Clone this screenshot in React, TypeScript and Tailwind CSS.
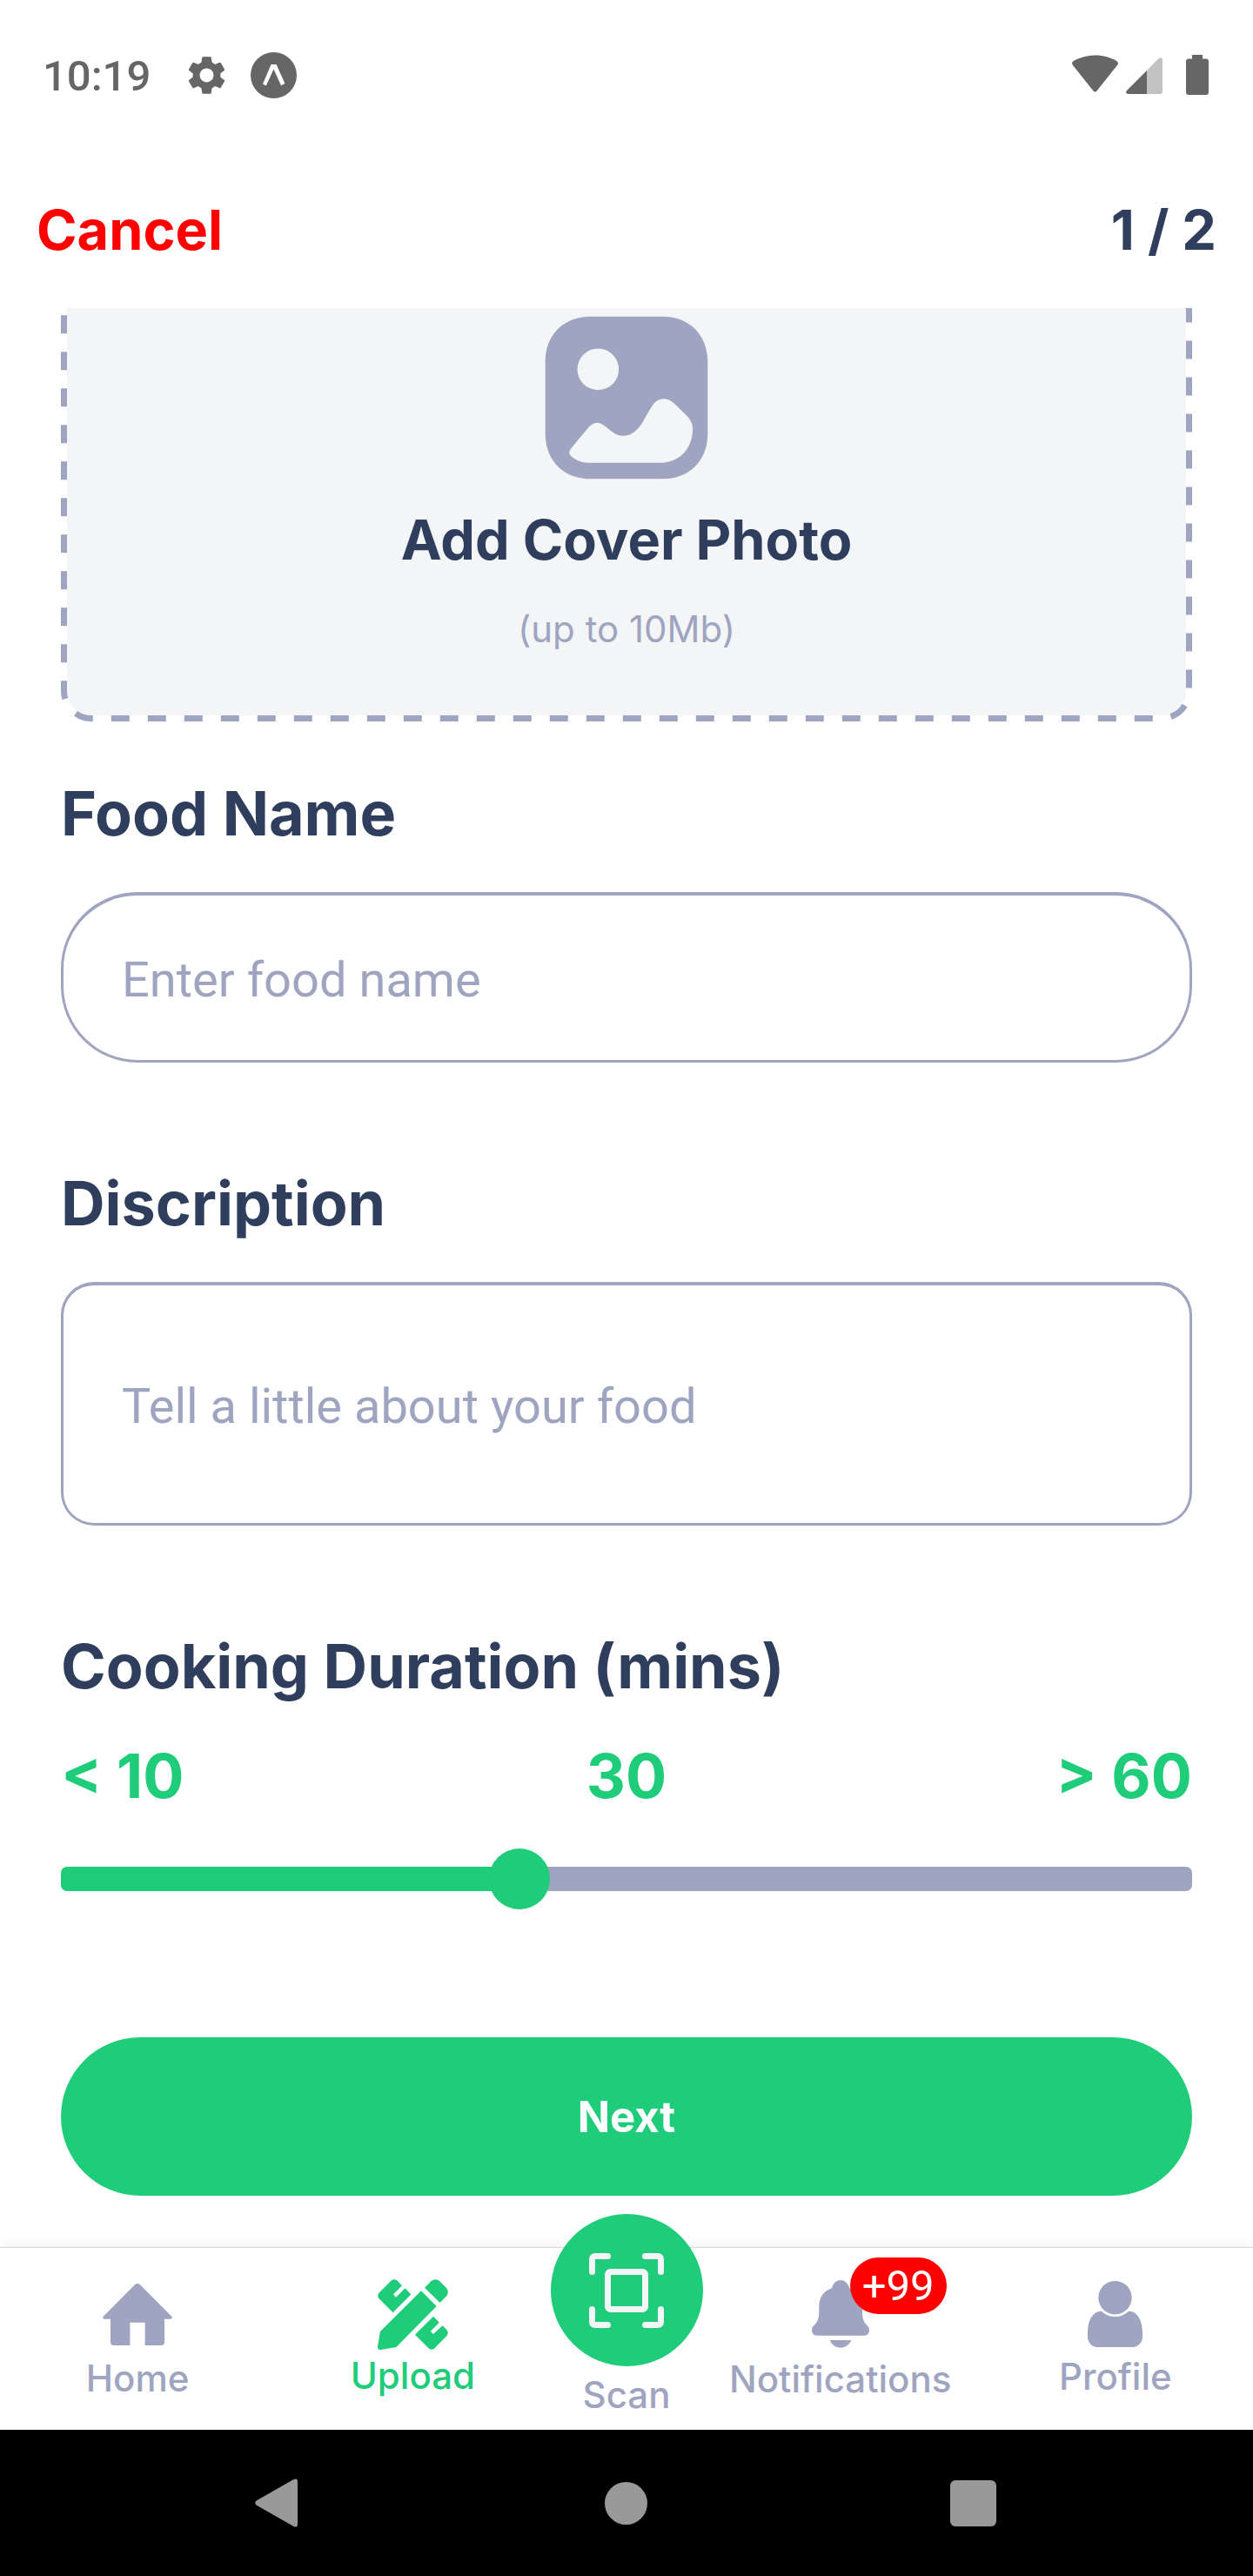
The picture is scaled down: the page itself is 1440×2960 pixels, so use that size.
import { useState } from "react";
import type { ReactNode } from "react";
import { MdSettings } from "react-icons/md";

function StatusBar() {
  return (
    <div className="flex h-[176px] items-center justify-between pl-[49px] pr-[51px] text-[#666666]">
      <div className="flex items-center">
        <span className="mr-[38px] font-[Roboto,sans-serif] text-[49px] font-medium leading-[58px]">10:19</span>
        <MdSettings className="mr-6 size-[53px] -translate-y-0.5" aria-hidden="true" />
        <svg className="h-14 w-[53px]" viewBox="0 0 53 56" aria-hidden="true">
          <circle cx="26.5" cy="26.5" r="26.5" fill="currentColor" />
          <path d="M14 36.5 23.6 14h6L39.4 36 35 38.2 26.5 19.5 17.8 38.5Z" fill="#fff" />
        </svg>
      </div>
      <div className="flex items-center">
        <svg className="mr-[9px] h-[54px] w-[53px]" viewBox="0 0 53 54" fill="currentColor" aria-hidden="true">
          <path d="M1 14Q-1.2 10.800 1.800 9C17 .2 36 .2 51.200 9Q54.200 10.800 52 14L28.500 43.500Q26.500 45.500 24.500 43.500Z" />
        </svg>
        <svg className="mr-[27px] h-[54px] w-[42px]" viewBox="0 -5 42 54" aria-hidden="true">
          <path d="M24 15 1 38Q-1.500 42 3 42H24Z" fill="currentColor" />
          <path d="M24 15 38 .8Q42-1 42 3V39Q42 42 39 42H24Z" fill="#c2c2c2" />
        </svg>
        <svg className="h-[54px] w-[26px]" viewBox="0 -2 26 54" fill="currentColor" aria-hidden="true">
          <path d="M7 0H19V4.500H23Q26 4.500 26 7.500V43Q26 46 23 46H3Q0 46 0 43V7.500Q0 4.500 3 4.500H7Z" />
        </svg>
      </div>
    </div>
  );
}

function ImageIcon() {
  return (
    <svg className="size-56" viewBox="0 0 24 24" fill="#9fa5c0" aria-hidden="true">
      <path
        fillRule="evenodd"
        d="M7.600 2H16.400C19.800 2 22 4.300 22 7.600V16.400C22 19.700 19.800 22 16.400 22H7.600C4.200 22 2 19.700 2 16.400V7.600C2 4.300 4.200 2 7.600 2ZM8.500 5.950A2.550 2.550 0 1 0 8.500 11.050A2.550 2.550 0 1 0 8.500 5.950ZM5.100 18.350C5.700 17.600 6.600 16.500 7.200 15.800C7.800 15.050 8.500 14.850 9.200 15.400C9.900 15.900 10.600 16.700 11.600 16.700C12.700 16.650 13.500 15.900 14.100 14.800C14.500 14.100 14.900 13.400 15.300 12.800C15.900 12 17 11.900 17.800 12.650C18.400 13.200 18.900 13.700 19.400 14.200C20 14.800 20.200 15.400 20.150 16.100C20 18.300 18.600 19.950 16.200 20.020H7.300C6.700 20 6.100 19.850 5.500 19.450C5 19.100 4.800 18.800 5.100 18.350Z"
      />
    </svg>
  );
}

function HomeIcon() {
  return (
    <svg className="h-[88px] w-20" viewBox="0 -9 80 88" fill="currentColor" aria-hidden="true">
      <path d="M37 1.200Q40-1 43 1.200L79.500 38Q80.500 40.700 78 40.700H71V67Q71 71 67 71H48.600V44.700H31.400V71H13Q9 71 9 67V40.700H2Q-.5 40.700 .5 38Z" />
    </svg>
  );
}

function UploadIcon() {
  return (
    <svg className="h-[82px] w-[81px]" viewBox="0 -1 81 82" fill="currentColor" aria-hidden="true">
      <path d="M17.600 38.300 2 22.700Q-1.600 19 2 15.300L15.600 1.600Q19-1.200 22.400 1.500L28 7.200 18 17.600 21 20.700 31.600 10.200 38.300 17.500Z" />
      <path d="M50 13.300 67.700 31 21.400 78 3.600 81Q-.3 81.300 0 77.600L3 60Z" />
      <path d="M54 9.700 62 1.800Q66-1.300 70.500 1.500L79.200 10.200Q82.400 14.400 79.400 19L71.600 27Z" />
      <path d="M64 42.700 70.800 49.700 60.800 59.700 64 63 74.600 53.300 79.300 58Q82.400 61.600 79.300 65.200L65.500 79.300Q62 82.400 58.500 79.300L42.900 63.700Z" />
    </svg>
  );
}

function BellIcon() {
  return (
    <svg className="h-[90px] w-[66px]" viewBox="0 -6 66 90" fill="currentColor" aria-hidden="true">
      <path d="M23 9.300C24.500 3 29 0 33 0S41.500 3 43.300 9.300C53 13 58 20.500 58 30V35C58 41 58.500 44 60 47.500C62 52 66 52.500 66 57.500C66 61 63.500 63.700 60.500 63.700H5.500C2.500 63.700 0 61 0 57.500C0 52.500 4 52 6 47.500C7.700 44 8.300 41 8.300 35V30C8.300 20.500 13 12.500 23 9.300Z" />
      <path d="M20.700 69H45.300C43 74.500 38 77.700 33 77.700S23 74.500 20.700 69Z" />
    </svg>
  );
}

function ProfileIcon() {
  return (
    <svg className="h-[84px] w-[63px]" viewBox="0 -4 63 84" fill="currentColor" aria-hidden="true">
      <circle cx="31.500" cy="19.200" r="19.200" />
      <path d="M16 34.800A22.200 22.200 0 0 0 47 34.800C57 34.800 63 45 63 60V64C63 70.500 58 76 52 76H11C5 76 0 70.500 0 64V60C0 45 6 34.800 16 34.800Z" />
    </svg>
  );
}

function ScanIcon() {
  return (
    <svg className="size-[86px]" viewBox="0 0 86 86" fill="none" stroke="#f4f5f7" strokeWidth="7" strokeLinecap="round" aria-hidden="true">
      <path d="M3.500 21.500V7.500Q3.500 3.500 7.500 3.500H21.500M64.500 3.500H78.500Q82.500 3.500 82.500 7.500V21.500M82.500 64.500V78.500Q82.500 82.500 78.500 82.500H64.500M21.500 82.500H7.500Q3.500 82.500 3.500 78.500V64.500" />
      <rect x="21.500" y="21.500" width="43" height="43" rx="3" />
    </svg>
  );
}

function NavItem({ label, active, children }: { label: string; active?: boolean; children: ReactNode }) {
  return (
    <a
      href="#"
      aria-current={active ? "page" : undefined}
      className={`flex min-w-0 flex-1 flex-col items-center justify-center gap-1 pb-0.5 ${active ? "text-[#1fcc79]" : "text-[#9fa5c0]"}`}
    >
      {children}
      <span className="text-[42px] font-medium leading-[52px]">{label}</span>
    </a>
  );
}

const MIN = 10;
const MAX = 60;

export default function App() {
  const [minutes, setMinutes] = useState(30);
  const ratio = (minutes - MIN) / (MAX - MIN);
  const stop = `calc(${ratio * 100}% + ${35 - 70 * ratio}px)`;

  return (
    <div className="flex min-h-screen flex-col bg-white font-[Inter,sans-serif] text-[#2e3e5c]">
      <StatusBar />
      <header className="flex h-[178px] items-center justify-between px-[42px] pb-0.5 text-[63px] font-bold leading-[76px]">
        <button type="button" className="text-[#ff0000]">Cancel</button>
        <span>1 / 2</span>
      </header>

      <main className="flex flex-1 flex-col overflow-hidden px-[70px] pb-[59px]">
        <button type="button" className="relative -mt-[89px] flex flex-col items-center rounded-[35px] py-20">
          <svg className="absolute inset-0 size-full" aria-hidden="true">
            <rect
              className="h-[calc(100%-7px)] w-[calc(100%-7px)]"
              x="3.500"
              y="3.500"
              rx="31.500"
              fill="#f4f5f7"
              stroke="#fff"
              strokeWidth="7"
            />
            <rect
              className="h-[calc(100%-7px)] w-[calc(100%-7px)]"
              x="3.500"
              y="3.500"
              rx="31.500"
              fill="none"
              stroke="#9fa5c0"
              strokeWidth="7"
              strokeDasharray="21 21"
              strokeDashoffset="15"
            />
          </svg>
          <span className="relative flex flex-col items-center">
            <ImageIcon />
            <span className="mt-[13px] text-[63px] font-bold leading-[76px]">Add Cover Photo</span>
            <span className="mt-[39px] text-[42px] leading-[52px] text-[#9fa5c0]">(up to 10Mb)</span>
          </span>
        </button>

        <label htmlFor="food-name" className="mt-16 text-[70px] font-bold leading-[84px]">Food Name</label>
        <input
          id="food-name"
          type="text"
          placeholder="Enter food name"
          className="mt-12 h-[196px] w-full rounded-[88px] border-3 border-t-4 border-[#9fa5c0] px-[67px] pt-1 font-[Roboto,sans-serif] text-[56px] outline-none placeholder:text-[#9fa5c0]"
        />

        <label htmlFor="description" className="mt-[120px] text-[70px] font-bold leading-[84px]">Discription</label>
        <textarea
          id="description"
          placeholder="Tell a little about your food"
          className="mt-12 h-[280px] w-full resize-none overflow-hidden rounded-[38px] border-3 border-t-4 border-[#9fa5c0] px-[67px] pt-[106px] font-[Roboto,sans-serif] text-[56px] leading-[66px] outline-none placeholder:text-[#9fa5c0]"
        />

        <label htmlFor="duration" className="mt-[120px] text-[70px] font-bold leading-[84px]">Cooking Duration (mins)</label>
        <div className="mt-[42px] grid grid-cols-3 text-[70px] font-bold leading-[84px] text-[#1fcc79]">
          <span>&lt; 10</span>
          <output htmlFor="duration" className="text-center">{minutes}</output>
          <span className="text-right">&gt; 60</span>
        </div>
        <input
          id="duration"
          type="range"
          min={MIN}
          max={MAX}
          value={minutes}
          onChange={(e) => setMinutes(Number(e.target.value))}
          style={{ backgroundImage: `linear-gradient(to right, #1fcc79 ${stop}, #9fa5c0 ${stop})` }}
          className="mt-[62px] h-7 w-full shrink-0 appearance-none rounded-[7px] outline-none [&::-webkit-slider-thumb]:size-[70px] [&::-webkit-slider-thumb]:appearance-none [&::-webkit-slider-thumb]:rounded-full [&::-webkit-slider-thumb]:bg-[#1fcc79]"
        />

        <button type="button" className="mt-[168px] h-[182px] shrink-0 rounded-full bg-[#1fcc79] pt-0.5 text-[49px] font-bold text-white">
          Next
        </button>
      </main>

      <nav className="flex h-[210px] border-t border-[#d8d8d8] bg-white shadow-[0_0_14px_rgba(0,0,0,0.08)]">
        <NavItem label="Home">
          <HomeIcon />
        </NavItem>
        <NavItem label="Upload" active>
          <UploadIcon />
        </NavItem>
        <a href="#" className="flex w-[175px] flex-col items-center justify-end gap-[7px] pb-[14px] text-[#9fa5c0]">
          <span className="flex size-[175px] shrink-0 items-center justify-center rounded-full bg-[#1fcc79]">
            <ScanIcon />
          </span>
          <span className="text-[42px] font-medium leading-[52px]">Scan</span>
        </a>
        <NavItem label="Notifications">
          <span className="relative">
            <BellIcon />
            <span className="absolute -top-5 left-11 flex h-[65px] items-center rounded-full bg-[#ff0000] px-[14px] font-[Roboto,sans-serif] text-[49px] leading-[65px] text-white">
              +99
            </span>
          </span>
        </NavItem>
        <NavItem label="Profile">
          <ProfileIcon />
        </NavItem>
      </nav>

      <footer className="grid h-[168px] grid-cols-3 place-items-center bg-black px-[122px]">
        <button type="button" aria-label="Back">
          <svg className="h-14 w-14" viewBox="0 0 56 56" fill="#999999" aria-hidden="true">
            <path d="M1.500 25.500 44.500 1Q49-1 49 3.500V52.500Q49 57 44.500 55L1.500 30.500Q-1 28 1.500 25.500Z" />
          </svg>
        </button>
        <button type="button" aria-label="Home screen" className="size-[49px] rounded-full bg-[#999999]" />
        <button type="button" aria-label="Recent apps" className="size-[53px] rounded-md bg-[#999999]" />
      </footer>
    </div>
  );
}
